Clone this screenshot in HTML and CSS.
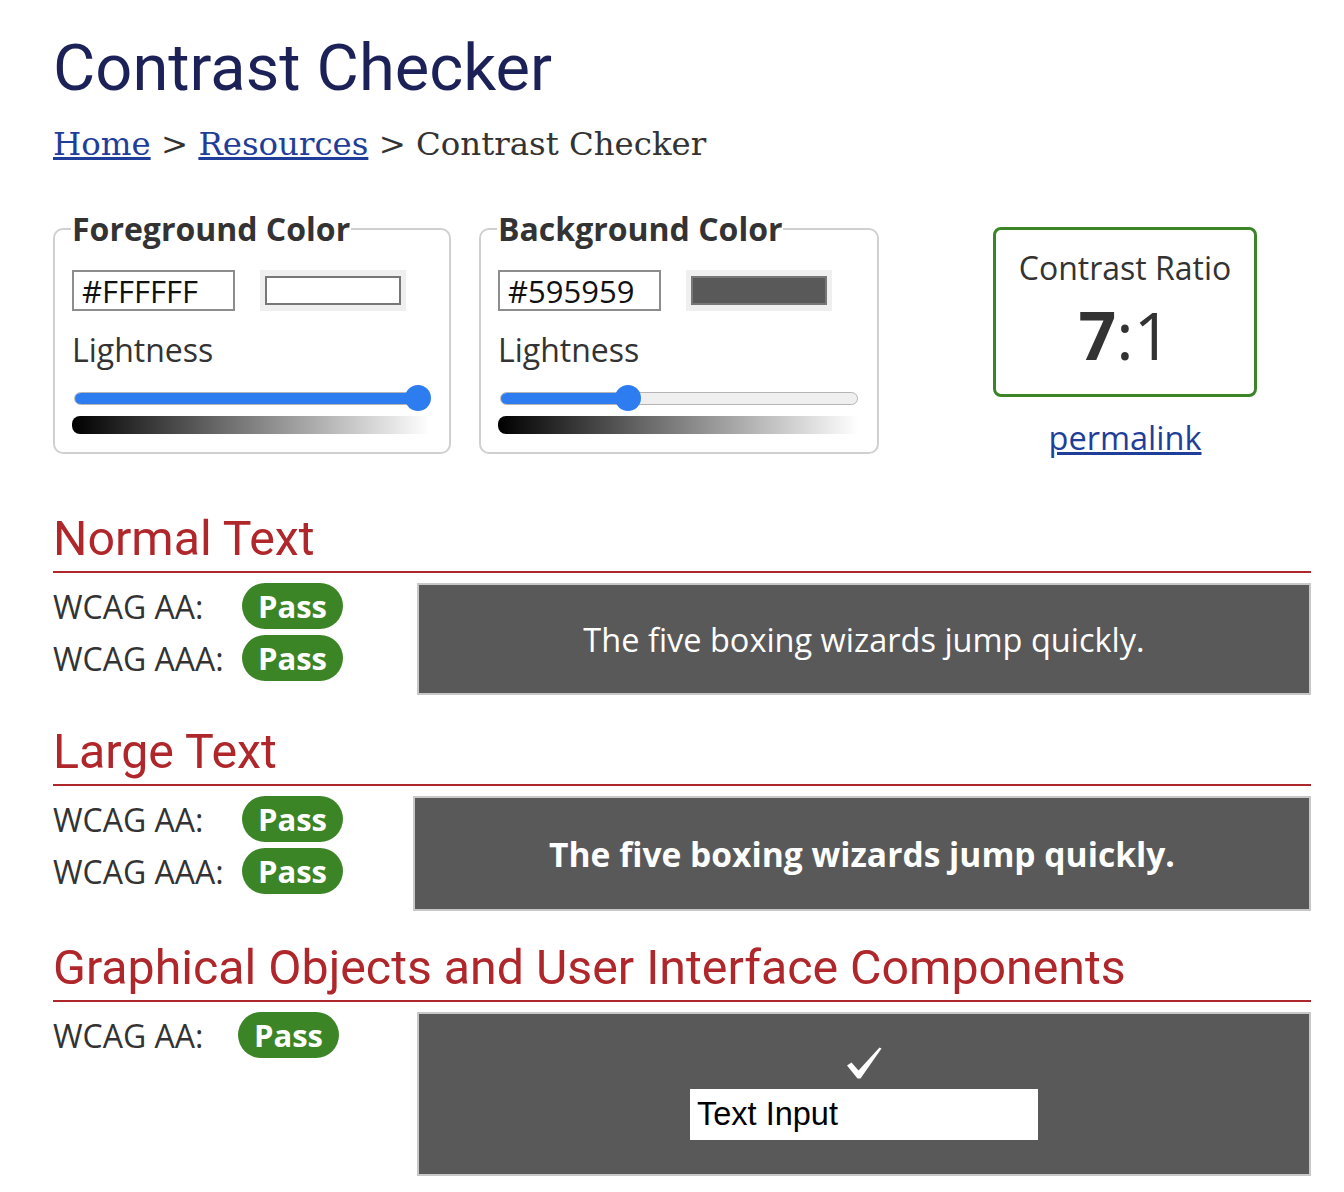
FILE: index.html
```html
<!DOCTYPE html>
<html lang="en">
<head>
<meta charset="utf-8">
<title>Contrast Checker</title>
<link rel="stylesheet" href="styles.css">
</head>
<body>
<main class="page">
  <h1 class="title">Contrast Checker</h1>
  <nav class="crumbs"><a href="#">Home</a> &gt; <a href="#">Resources</a> &gt; Contrast Checker</nav>

  <div class="controls">
    <fieldset class="picker">
      <legend>Foreground Color</legend>
      <div class="inputs">
        <input class="hex" type="text" value="#FFFFFF">
        <span class="swatch"><span class="swatch-in swatch-fg"></span></span>
      </div>
      <div class="light">Lightness</div>
      <div class="slider">
        <div class="track"><div class="fill fill-fg"></div></div>
        <div class="thumb thumb-fg"></div>
      </div>
      <div class="grad"></div>
    </fieldset>

    <fieldset class="picker">
      <legend>Background Color</legend>
      <div class="inputs">
        <input class="hex" type="text" value="#595959">
        <span class="swatch"><span class="swatch-in swatch-bg"></span></span>
      </div>
      <div class="light">Lightness</div>
      <div class="slider">
        <div class="track"><div class="fill fill-bg"></div></div>
        <div class="thumb thumb-bg"></div>
      </div>
      <div class="grad"></div>
    </fieldset>

    <div class="result">
      <div class="ratio">
        <div class="ratio-label">Contrast Ratio</div>
        <div class="ratio-value"><b>7</b>:1</div>
      </div>
      <a class="permalink" href="#">permalink</a>
    </div>
  </div>

  <section class="sect">
    <h2>Normal Text</h2>
    <div class="sect-body">
      <div class="checks">
        <div class="check"><span class="lbl">WCAG AA:</span><span class="pass">Pass</span></div>
        <div class="check"><span class="lbl">WCAG AAA:</span><span class="pass">Pass</span></div>
      </div>
      <div class="sample sample-normal">The five boxing wizards jump quickly.</div>
    </div>
  </section>

  <section class="sect">
    <h2>Large Text</h2>
    <div class="sect-body">
      <div class="checks">
        <div class="check"><span class="lbl">WCAG AA:</span><span class="pass">Pass</span></div>
        <div class="check"><span class="lbl">WCAG AAA:</span><span class="pass">Pass</span></div>
      </div>
      <div class="sample sample-large">The five boxing wizards jump quickly.</div>
    </div>
  </section>

  <section class="sect">
    <h2>Graphical Objects and User Interface Components</h2>
    <div class="sect-body">
      <div class="checks">
        <div class="check"><span class="lbl">WCAG AA:</span><span class="pass pass-g">Pass</span></div>
      </div>
      <div class="sample sample-ui">
        <svg class="tick" width="36" height="32" viewBox="0 0 36 32" aria-hidden="true">
          <path d="M1 18.5 L5.5 15.5 L12.5 23.5 L33.5 0.5 L35.5 1.5 L14.5 31.5 L11.5 31.5 Z" fill="#fff"/>
        </svg>
        <input class="demo-input" type="text" value="Text Input">
      </div>
    </div>
  </section>
</main>
</body>
</html>
```

FILE: styles.css
```css
* { box-sizing: border-box; }
html, body { margin: 0; padding: 0; background: #fff; }
body { font-family: "Open Sans", "Liberation Sans", sans-serif; color: #333; }

.page { padding: 28px 33px 0 53px; width: 1344px; }

.title {
  font-family: Roboto, "Liberation Sans", sans-serif;
  font-weight: 400;
  font-size: 65px;
  line-height: 80px;
  color: #1c2158;
  margin: 0;
}

.crumbs {
  font-family: "DejaVu Serif", "Liberation Serif", serif;
  font-size: 32.4px;
  line-height: 40px;
  color: #333;
  margin-top: 16px;
}
.crumbs a { color: #1f3e9a; }

.controls { display: flex; align-items: flex-start; margin-top: 48px; }

.picker {
  margin: 0;
  border: 2px solid #d0d0d0;
  border-radius: 10px;
  padding: 0 19px 18px 17px;
  width: 398px;
}
.picker + .picker { margin-left: 28px; width: 400px; }
.picker legend {
  font-weight: 700;
  font-size: 32px;
  line-height: 34px;
  padding: 0 1px;
  margin-left: -1px;
  color: #333;
}

.inputs { display: flex; align-items: center; margin-top: 24px; }
.hex {
  width: 163px; height: 41px;
  border: 2px solid #8d8d8d;
  font-family: "Open Sans", sans-serif;
  font-size: 31px;
  padding: 0 8px;
  color: #111;
  background: #fff;
  border-radius: 0;
}
.swatch {
  margin-left: 25px;
  width: 146px; height: 41px;
  background: #efefef;
  padding: 6px 5px;
  display: flex;
}
.swatch-in { flex: 1; border: 2px solid #777; }
.swatch-fg { background: #fff; }
.swatch-bg { background: #595959; }

.light { font-size: 32px; line-height: 44px; margin-top: 17px; color: #333; }

.slider { position: relative; height: 28px; margin-top: 12px; }
.track {
  position: absolute; left: 2px; right: 0; top: 8px; height: 13px;
  border-radius: 7px;
  background: #efefef;
  border: 1.5px solid #b5b5b5;
  overflow: hidden;
}
.fill { height: 100%; background: #2d7cf0; }
.fill-fg { width: 100%; }
.fill-bg { width: 37%; }
.thumb {
  position: absolute; top: 1px;
  width: 26px; height: 26px; border-radius: 50%;
  background: #2d7cf0;
}
.thumb-fg { right: -1px; }
.thumb-bg { left: 117px; }

.grad {
  height: 18px; margin-top: 4px;
  border-radius: 8px 0 0 8px;
  background: linear-gradient(to right, #000, #fff);
}

.result { margin-left: 114px; width: 264px; display: flex; flex-direction: column; align-items: center; margin-top: 15px; }
.ratio {
  width: 264px; height: 170px;
  border: 3px solid #3c8527;
  border-radius: 8px;
  text-align: center;
  color: #333;
}
.ratio-label { font-size: 32px; line-height: 40px; margin-top: 18px; }
.ratio-value { font-size: 66px; line-height: 80px; margin-top: 6px; }
.ratio-value b { font-weight: 700; }
.permalink { color: #1f3e9a; font-size: 32.5px; line-height: 40px; margin-top: 21px; }

.sect { margin-top: 53px; }
.sect + .sect { margin-top: 29px; }
.sect h2 {
  font-family: Roboto, "Liberation Sans", sans-serif;
  font-weight: 400;
  font-size: 48.3px;
  line-height: 56px;
  color: #b0272b;
  margin: 0;
  border-bottom: 2px solid #b0272b;
  padding-bottom: 4px;
}
.sect-body { display: flex; align-items: flex-start; margin-top: 10px; }

.checks { width: 364px; flex: none; }
.check { display: flex; align-items: center; height: 46px; margin-bottom: 6px; }
.lbl { width: 189px; font-size: 32px; color: #333; }
.pass {
  width: 101px; height: 46px;
  border-radius: 23px;
  background: #3c8527;
  color: #fff;
  font-weight: 700;
  font-size: 31px;
  display: flex; align-items: center; justify-content: center;
}
.pass-g { margin-left: -4px; }

.sample {
  flex: 1;
  background: #595959;
  border: 2px solid #c8c8c8;
  color: #fff;
  display: flex; align-items: center; justify-content: center;
  height: 112px;
  font-size: 32.5px;
}
.sample-large { font-size: 33.6px; font-weight: 700; height: 115px; margin-left: -4px; }
.sample-ui { flex-direction: column; height: 164px; justify-content: flex-start; }
.tick { display: block; margin-top: 33px; }
.demo-input {
  margin-top: 10px;
  width: 348px; height: 51px;
  border: none;
  background: #fff;
  font-family: "Liberation Sans", Arial, sans-serif;
  font-size: 32.5px;
  color: #000;
  padding: 0 7px;
}
```
